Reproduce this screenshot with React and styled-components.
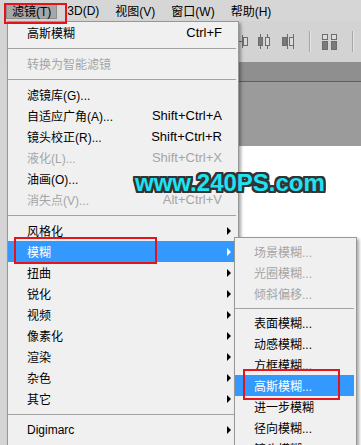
import React from 'react';
import styled, { createGlobalStyle } from 'styled-components';

const GlobalStyle = createGlobalStyle`
  html, body { margin: 0; padding: 0; background: #fff; }
  body { overflow: hidden; font-family: "Liberation Sans", "Noto Sans CJK SC", sans-serif; }
`;

const Screen = styled.div`
  position: relative;
  width: 361px;
  height: 445px;
  overflow: hidden;
  display: flex;
  flex-direction: column;
  font-family: "Liberation Sans", "Noto Sans CJK SC", sans-serif;
  font-size: 12px;
  color: #000;
`;

const MenuBar = styled.div`
  flex: none;
  height: 21px;
  background: #d6d6d6;
  display: flex;
  align-items: center;
  padding-left: 6px;
  gap: 4px;
`;

const BarItem = styled.div`
  height: 16px;
  padding: 0 6px;
  display: flex;
  align-items: center;
  white-space: nowrap;
  background: ${(p) => (p.$active ? '#a7a7a7' : 'transparent')};
  box-shadow: ${(p) => (p.$active ? 'inset 0 0 0 1px #8f8f8f' : 'none')};
`;

const OptionsBar = styled.div`
  flex: none;
  height: 41px;
  background: #d3d3d3;
  display: flex;
  align-items: center;
  padding-left: 236px;
`;

const Tool = styled.div`
  flex: none;
  display: flex;
  margin-left: ${(p) => p.$ml || 0}px;
`;

const VSep = styled.div`
  flex: none;
  width: 1px;
  height: 21px;
  background: #a6a6a6;
  box-shadow: 1px 0 0 #e6e6e6;
  margin-left: ${(p) => p.$ml || 0}px;
`;

const Workspace = styled.div`
  flex: 1;
  display: flex;
  min-height: 0;
`;

const LeftStrip = styled.div`
  flex: none;
  width: 7px;
  background: #d4d4d4;
`;

const MainArea = styled.div`
  flex: 1;
  display: flex;
  flex-direction: column;
`;

const TabBar = styled.div`
  flex: none;
  height: 19px;
  background: #8f8f8f;
  border-bottom: 1px solid #5f5f5f;
`;

const Pasteboard = styled.div`
  flex: none;
  height: 64px;
  background: #9b9b9b;
`;

const Canvas = styled.div`
  flex: 1;
  background: #ffffff;
`;

const Menu = styled.div`
  position: absolute;
  left: ${(p) => p.$x}px;
  top: ${(p) => p.$y}px;
  width: ${(p) => p.$w}px;
  box-sizing: border-box;
  background: #f0f0f0;
  border: 1px solid #979797;
  padding-top: ${(p) => p.$pt || 0}px;
  box-shadow: 2px 2px 3px rgba(0, 0, 0, 0.35);
`;

const Row = styled.div`
  height: 21px;
  margin: 0 2px 0 ${(p) => p.$ml || 0}px;
  padding-left: 19px;
  display: flex;
  align-items: center;
  white-space: nowrap;
  color: ${(p) => (p.$hi ? '#ffffff' : p.$disabled ? '#a5a5a5' : '#000000')};
  background: ${(p) => (p.$hi ? '#3399ff' : 'transparent')};
`;

const Label = styled.span`
  flex: none;
`;

const Shortcut = styled.span`
  margin-left: auto;
  margin-right: 14px;
  font-size: 13px;
`;

const Arrow = styled.span`
  margin-left: auto;
  margin-right: 5px;
  width: 0;
  height: 0;
  border-left: 4px solid currentColor;
  border-top: 4px solid transparent;
  border-bottom: 4px solid transparent;
`;

const Sep = styled.div`
  height: ${(p) => p.$h}px;
  margin: 0 2px 0 ${(p) => p.$ml || 0}px;
  display: flex;
  align-items: center;
  &::after {
    content: '';
    flex: 1;
    height: 1px;
    background: #a3a3a3;
  }
`;

const Callout = styled.div`
  position: absolute;
  left: ${(p) => p.$x}px;
  top: ${(p) => p.$y}px;
  width: ${(p) => p.$w}px;
  height: ${(p) => p.$h}px;
  box-sizing: border-box;
  border: 2px solid #e5131b;
  pointer-events: none;
`;

const Watermark = styled.div`
  position: absolute;
  left: 135px;
  top: 171px;
  font-family: "Liberation Sans", Arial, sans-serif;
  font-weight: bold;
  font-size: 24px;
  line-height: 1;
  color: #1fe3f2;
  white-space: nowrap;
  text-shadow:
    2px 0 0 #333, -2px 0 0 #333, 0 2px 0 #333, 0 -2px 0 #333,
    2px 2px 0 #333, -2px -2px 0 #333, 2px -2px 0 #333, -2px 2px 0 #333,
    1px 2px 0 #333, 2px 1px 0 #333, -1px 2px 0 #333, -2px 1px 0 #333,
    1px -2px 0 #333, 2px -1px 0 #333, -1px -2px 0 #333, -2px -1px 0 #333;
`;

const IconAlignA = () => (
  <svg width="12" height="15" viewBox="0 0 12 15">
    <line x1="6.5" y1="1" x2="6.5" y2="14" stroke="#6d6d6d" />
    <rect x="7.5" y="3.5" width="4" height="8" fill="#d8d8d8" stroke="#6d6d6d" />
    <line x1="0" y1="7.5" x2="6" y2="7.5" stroke="#6d6d6d" />
  </svg>
);

const IconDistB = () => (
  <svg width="12" height="15" viewBox="0 0 12 15">
    <line x1="2.5" y1="0" x2="2.5" y2="15" stroke="#6d6d6d" />
    <rect x="0.5" y="3.5" width="4" height="8" fill="#7a7a7a" stroke="#6d6d6d" />
    <line x1="9.5" y1="0" x2="9.5" y2="15" stroke="#6d6d6d" />
    <rect x="7.5" y="3.5" width="4" height="8" fill="#dcdcdc" stroke="#6d6d6d" />
  </svg>
);

const IconDistC = () => (
  <svg width="12" height="15" viewBox="0 0 12 15">
    <rect x="0.5" y="3.5" width="4" height="8" fill="#7a7a7a" stroke="#6d6d6d" />
    <line x1="5.5" y1="0" x2="5.5" y2="15" stroke="#6d6d6d" />
    <rect x="7.5" y="3.5" width="4" height="8" fill="#dcdcdc" stroke="#6d6d6d" />
    <line x1="11.5" y1="0" x2="11.5" y2="15" stroke="#6d6d6d" />
  </svg>
);

const IconSpace = () => (
  <svg width="15" height="16" viewBox="0 0 15 16">
    <rect x="0.5" y="0.5" width="5" height="5" fill="#dcdcdc" stroke="#6d6d6d" />
    <rect x="0.5" y="7.5" width="5" height="8" fill="#7a7a7a" stroke="#6d6d6d" />
    <rect x="9.5" y="0.5" width="5" height="5" fill="#dcdcdc" stroke="#6d6d6d" />
    <rect x="9.5" y="7.5" width="5" height="8" fill="#7a7a7a" stroke="#6d6d6d" />
  </svg>
);

const mainItems = [
  { label: '高斯模糊', sc: 'Ctrl+F' },
  { sep: true },
  { label: '转换为智能滤镜', dis: true },
  { sep: true },
  { label: '滤镜库(G)...' },
  { label: '自适应广角(A)...', sc: 'Shift+Ctrl+A' },
  { label: '镜头校正(R)...', sc: 'Shift+Ctrl+R' },
  { label: '液化(L)...', sc: 'Shift+Ctrl+X', dis: true },
  { label: '油画(O)...' },
  { label: '消失点(V)...', sc: 'Alt+Ctrl+V', dis: true },
  { sep: true },
  { label: '风格化', sub: true },
  { label: '模糊', sub: true, hi: true },
  { label: '扭曲', sub: true },
  { label: '锐化', sub: true },
  { label: '视频', sub: true },
  { label: '像素化', sub: true },
  { label: '渲染', sub: true },
  { label: '杂色', sub: true },
  { label: '其它', sub: true },
  { sep: true },
  { label: 'Digimarc', sub: true },
  { label: 'Imagenomic', sub: true },
];

const subItems = [
  { label: '场景模糊...', dis: true },
  { label: '光圈模糊...', dis: true },
  { label: '倾斜偏移...', dis: true },
  { sep: true },
  { label: '表面模糊...' },
  { label: '动感模糊...' },
  { label: '方框模糊...' },
  { label: '高斯模糊...', hi: true },
  { label: '进一步模糊' },
  { label: '径向模糊...' },
  { label: '镜头模糊...' },
];

const MenuList = ({ items, sepH }) =>
  items.map((it, i) =>
    it.sep ? (
      <Sep key={i} $h={sepH} />
    ) : (
      <Row key={i} $hi={it.hi} $disabled={it.dis}>
        <Label>{it.label}</Label>
        {it.sc && <Shortcut>{it.sc}</Shortcut>}
        {it.sub && <Arrow />}
      </Row>
    )
  );

export default function App() {
  return (
    <>
      <GlobalStyle />
      <Screen>
        <MenuBar>
          <BarItem $active>滤镜(T)</BarItem>
          <BarItem>3D(D)</BarItem>
          <BarItem>视图(V)</BarItem>
          <BarItem>窗口(W)</BarItem>
          <BarItem>帮助(H)</BarItem>
        </MenuBar>
        <OptionsBar>
          <Tool><IconAlignA /></Tool>
          <Tool $ml={10}><IconDistB /></Tool>
          <Tool $ml={12}><IconDistC /></Tool>
          <VSep $ml={15} />
          <Tool $ml={12}><IconSpace /></Tool>
          <VSep $ml={15} />
        </OptionsBar>
        <Workspace>
          <LeftStrip />
          <MainArea>
            <TabBar />
            <Pasteboard />
            <Canvas />
          </MainArea>
        </Workspace>

        <Menu $x={7} $y={21} $w={232}>
          <MenuList items={mainItems} sepH={10} />
        </Menu>
        <Menu $x={234} $y={237} $w={123} $pt={3}>
          <MenuList items={subItems} sepH={8} />
        </Menu>

        <Callout $x={4} $y={3} $w={63} $h={21} />
        <Callout $x={14} $y={237} $w={143} $h={27} />
        <Callout $x={243} $y={369} $w={97} $h={31} />

        <Watermark>www.240PS.com</Watermark>
      </Screen>
    </>
  );
}
